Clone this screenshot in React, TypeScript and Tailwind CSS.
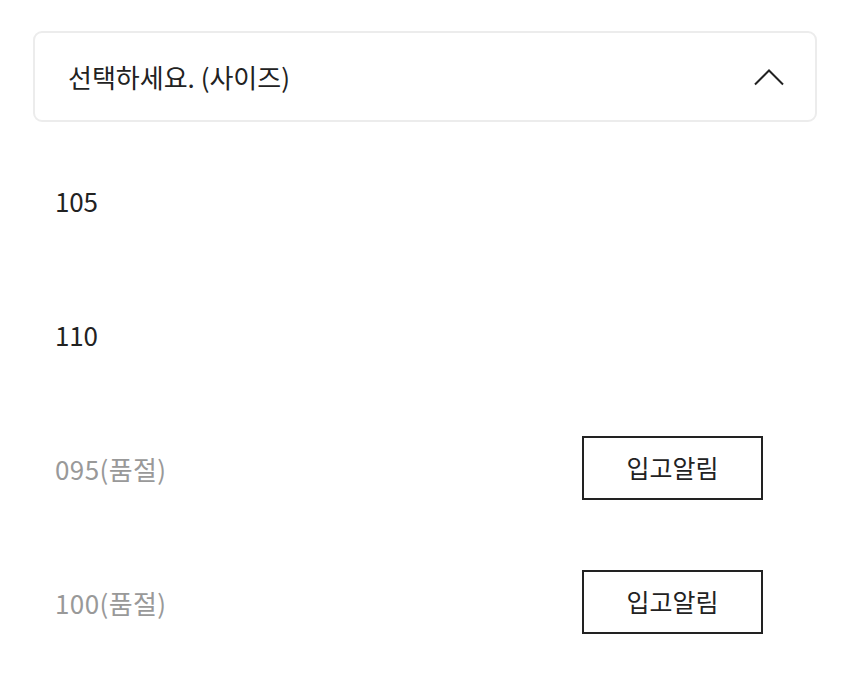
const sizes = [
  { label: "105", soldOut: false },
  { label: "110", soldOut: false },
  { label: "095(품절)", soldOut: true },
  { label: "100(품절)", soldOut: true },
];

export default function App() {
  return (
    <div
      className="w-[850px] h-[682px] bg-white pt-[31px] overflow-hidden"
      style={{ fontFamily: '"Noto Sans CJK KR", "Noto Sans", sans-serif' }}
    >
      {/* select header */}
      <div className="mx-[33px] h-[91px] rounded-[9px] border-2 border-[#ececec] flex items-center justify-between pl-[33px] pr-[30px]">
        <span className="text-[26px] text-[#222]">선택하세요. (사이즈)</span>
        <svg width="32" height="18" viewBox="0 0 32 18" fill="none">
          <path d="M2 16.5 L16 2.5 L30 16.5" stroke="#222" strokeWidth="2" />
        </svg>
      </div>

      {/* size options */}
      <ul className="pt-[11px] pl-[55px] pr-[87px]">
        {sizes.map((s) => (
          <li key={s.label} className="h-[134px] flex items-center justify-between">
            <span
              className={
                "text-[26px] " +
                (s.soldOut ? "text-[#999] tracking-[0.4px]" : "text-[#222] tracking-[-0.2px]")
              }
            >
              {s.label}
            </span>
            {s.soldOut && (
              <button className="w-[181px] h-[64px] border-2 border-[#222] text-[25px] text-[#222]">
                입고알림
              </button>
            )}
          </li>
        ))}
      </ul>
    </div>
  );
}
